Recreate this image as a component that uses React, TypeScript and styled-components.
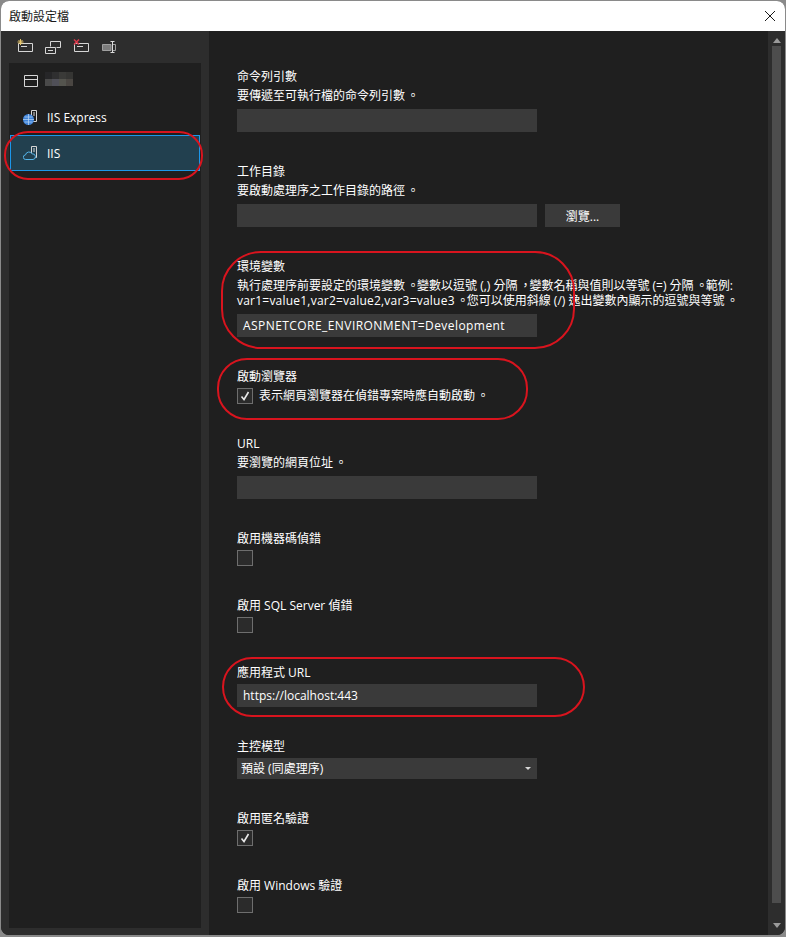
import styled, { createGlobalStyle } from 'styled-components';

const GlobalStyle = createGlobalStyle`
html, body {
	margin: 0;
	height: 100%;
	background: #8a8a8a;
}
* {
	box-sizing: border-box;
}
`;

const Window = styled.div`
position: relative;
width: 784px;
height: 934px;
margin: 1px 0 0 1px;
border-radius: 8px;
overflow: hidden;
display: flex;
flex-direction: column;
background: #1f1f1f;
color: #fff;
font-family: "Open Sans", "Noto Sans CJK TC", sans-serif;
font-size: 12px;
text-spacing-trim: space-all;
`;
const TitleBar = styled.div`
flex: none;
height: 30px;
padding: 0 9px 0 8px;
display: flex;
align-items: center;
justify-content: space-between;
background: #fff;
color: #1a1a1a;
`;
const CloseButton = styled.button`
display: flex;
padding: 0;
border: 0;
background: none;
svg {
	display: block;
}
`;
const Body = styled.div`
flex: 1;
min-height: 0;
display: flex;
`;
const Sidebar = styled.aside`
flex: none;
width: 208px;
padding: 0 8px 7px;
display: flex;
flex-direction: column;
background: #2d2d2d;
`;
const Toolbar = styled.div`
flex: none;
height: 32px;
padding-left: 8px;
display: flex;
align-items: center;
gap: 12px;
`;
const ProfileList = styled.ul`
flex: 1;
margin: 0;
padding: 0;
list-style: none;
background: #1f1f1f;
`;
const ProfileItem = styled.li<{ $active?: boolean }>`
height: 36px;
margin: 0 1px;
padding-left: 12px;
display: flex;
align-items: center;
gap: 8px;
border: 1px solid ${(p) => (p.$active ? '#1c97ea' : 'transparent')};
background: ${(p) => (p.$active ? '#22404f' : 'transparent')};
svg {
	flex: none;
}
`;
// 打了馬賽克的專案名稱
const BlurredName = styled.div`
width: 28px;
height: 14px;
margin: -4px 0 0 -2px;
background:
	linear-gradient(90deg, #262628 0 25%, #2f2f30 25% 50%, #3a3a38 50% 75%, #353533 75%) top / 100% 50% no-repeat,
	linear-gradient(90deg, #4a4a4a 0 25%, #505058 25% 50%, #54544e 50% 75%, #4a4642 75%) bottom / 100% 50% no-repeat;
`;
const Content = styled.main`
flex: 1;
min-width: 0;
padding: 37px 0 0 28px;
display: flex;
flex-direction: column;
gap: 31px;
overflow: hidden;
`;
const Section = styled.section`
display: flex;
flex-direction: column;
`;
const Label = styled.div`
height: 16px;
line-height: 18px;
margin-bottom: 4px;
`;
const Description = styled.div`
width: 510px;
line-height: 15px;
margin-bottom: 6px;
white-space: nowrap;
`;
const Latin = styled.span`
letter-spacing: 0.22px;
`;
// 全形標點佔滿一個字寬，字形靠中
const Punct = styled.span`
display: inline-block;
width: 1em;
padding-left: 2px;
`;
const FieldRow = styled.div`
display: flex;
gap: 8px;
`;
const TextField = styled.div<{ $tracking?: number }>`
width: 300px;
height: 23px;
padding: 0 6px;
line-height: 23px;
background: #3a3a3a;
letter-spacing: ${(p) => p.$tracking ?? 0}px;
`;
const BrowseButton = styled.button`
width: 75px;
height: 23px;
padding: 0;
border: 0;
background: #3a3a3a;
color: #fff;
font: inherit;
`;
const SelectField = styled(TextField)`
height: 21px;
line-height: 21px;
padding: 0 5px 0 4px;
display: flex;
align-items: center;
justify-content: space-between;
`;
const Caret = styled.span`
width: 0;
height: 0;
margin-right: 1px;
border-left: 3px solid transparent;
border-right: 3px solid transparent;
border-top: 3px solid #d8d8d8;
`;
const CheckRow = styled.div`
height: 16px;
line-height: 16px;
display: flex;
align-items: center;
gap: 6px;
`;
const CheckBox = styled.div`
width: 16px;
height: 16px;
display: flex;
align-items: center;
justify-content: center;
border: 1px solid #6e6e6e;
background: #2b2b2b;
`;
const Scrollbar = styled.div`
flex: none;
width: 17px;
display: flex;
flex-direction: column;
align-items: center;
padding: 7px 0 8px;
background: #2d2d2d;
`;
const ScrollArrow = styled.span<{ $down?: boolean }>`
flex: none;
width: 0;
height: 0;
border-left: 4.5px solid transparent;
border-right: 4.5px solid transparent;
${(p) => (p.$down ? 'border-top: 5px solid #9a9a9a;' : 'border-bottom: 5px solid #9a9a9a;')}
`;
const ScrollThumb = styled.div`
flex: none;
width: 9px;
height: 857px;
margin: 3px 0 20px;
background: #4d4d4d;
`;
// 截圖上手繪的紅色圈選
const Annotation = styled.div<{ $x: number; $y: number; $w: number; $h: number; $r: number }>`
position: absolute;
left: ${(p) => p.$x}px;
top: ${(p) => p.$y}px;
width: ${(p) => p.$w}px;
height: ${(p) => p.$h}px;
border: 2px solid #d9141e;
border-radius: ${(p) => p.$r}px;
pointer-events: none;
`;

const stroke = '#d6d6d6';

const ToolIcon = ({ children }: { children: React.ReactNode }) => (
	<svg width="16" height="16" viewBox="0 0 16 16">{children}</svg>
);

function Check() {
	return (
		<svg width="12" height="12" viewBox="0 0 12 12">
			<path d="M2.5 6.5L5 9.5L9.5 2" fill="none" stroke="#e8e8e8" strokeWidth="1.6" />
		</svg>
	);
}

export default function App() {
	return (
		<>
			<GlobalStyle />
			<Window lang="zh-Hant">
				<TitleBar>
					<span>啟動設定檔</span>
					<CloseButton>
						<svg width="12" height="12" viewBox="0 0 12 12">
							<path d="M1 1L11 11M11 1L1 11" stroke="#1a1a1a" fill="none" />
						</svg>
					</CloseButton>
				</TitleBar>
				<Body>
					<Sidebar>
						<Toolbar>
							<ToolIcon>
								<path d="M1.5 4.5h14v8h-14zM4 7.5h6" fill="none" stroke={stroke} />
								<path d="M3.5 0v6M.5 3h6M1.5 1l4 4M5.5 1l-4 4" stroke="#e8c66a" fill="none" />
							</ToolIcon>
							<ToolIcon>
								<path d="M5.5 7.5v-5h10v6h-4M.5 8.5h10v6h-10zM3 11.5h5" fill="none" stroke={stroke} />
							</ToolIcon>
							<ToolIcon>
								<path d="M1.5 4.5h14v8h-14zM4 7.5h6" fill="none" stroke={stroke} />
								<path d="M1 .5l5 5M6 .5l-5 5" stroke="#d8384a" strokeWidth="1.5" fill="none" />
							</ToolIcon>
							<ToolIcon>
								<path d="M1.5 5.5h8.5v6h-8.5z" fill="#7c7c7c" stroke="#a0a0a0" />
								<path d="M12 5.5h2.5v6H12" fill="none" stroke="#a0a0a0" />
								<path d="M9.5 2.5h4M11.5 2.5v11M9.5 13.5h4" fill="none" stroke="#dcdcdc" />
							</ToolIcon>
						</Toolbar>
						<ProfileList>
							<ProfileItem>
								<svg width="16" height="16" viewBox="0 0 16 16">
									<path d="M1.5 2.5h13v11h-13zM1.5 6.5h13" fill="none" stroke={stroke} />
								</svg>
								<BlurredName />
							</ProfileItem>
							<ProfileItem>
								<svg width="16" height="16" viewBox="0 0 16 16">
									<path d="M8.5 1.5h5v11h-5zM10 4h2M10 6h2" fill="none" stroke={stroke} />
									<circle cx="5.5" cy="10.5" r="5.5" fill="#3f83d8" />
									<path d="M0 10.5h11M5.5 5v11M1.5 8h8M1.5 13h8" stroke="#bcd8f5" strokeWidth=".7" fill="none" />
								</svg>
								<span>IIS Express</span>
							</ProfileItem>
							<ProfileItem $active>
								<svg width="16" height="16" viewBox="0 0 16 16">
									<path d="M8.5 1.5h5v11h-5zM10 4h2M10 6h2" fill="none" stroke={stroke} />
									<path d="M2.8 14.5a2.3 2.3 0 0 1-.3-4.6a3.6 3.6 0 0 1 6.7-1a2.8 2.8 0 0 1 .8 5.6z" fill="#22404f" stroke="#55b4e8" />
								</svg>
								<span>IIS</span>
							</ProfileItem>
						</ProfileList>
					</Sidebar>
					<Content>
						<Section>
							<Label>命令列引數</Label>
							<Description>要傳遞至可執行檔的命令列引數<Punct>。</Punct></Description>
							<TextField />
						</Section>
						<Section>
							<Label>工作目錄</Label>
							<Description>要啟動處理序之工作目錄的路徑<Punct>。</Punct></Description>
							<FieldRow>
								<TextField />
								<BrowseButton>瀏覽...</BrowseButton>
							</FieldRow>
						</Section>
						<Section>
							<Label>環境變數</Label>
							<Description>
								執行處理序前要設定的環境變數<Punct>。</Punct>變數以逗號 (,) 分隔<Punct>，</Punct>變數名稱與值則以等號 (=) 分隔<Punct>。</Punct>範例:
								<br />
								<Latin>var1=value1,var2=value2,var3=value3</Latin><Punct>。</Punct>您可以使用斜線 (/) 逸出變數內顯示的逗號與等號<Punct>。</Punct>
							</Description>
							<TextField $tracking={0.44}>ASPNETCORE_ENVIRONMENT=Development</TextField>
						</Section>
						<Section>
							<Label>啟動瀏覽器</Label>
							<CheckRow>
								<CheckBox><Check /></CheckBox>
								<span>表示網頁瀏覽器在偵錯專案時應自動啟動<Punct>。</Punct></span>
							</CheckRow>
						</Section>
						<Section>
							<Label>URL</Label>
							<Description>要瀏覽的網頁位址<Punct>。</Punct></Description>
							<TextField />
						</Section>
						<Section>
							<Label>啟用機器碼偵錯</Label>
							<CheckBox />
						</Section>
						<Section>
							<Label>啟用 SQL Server 偵錯</Label>
							<CheckBox />
						</Section>
						<Section>
							<Label>應用程式 URL</Label>
							<TextField>https://localhost:443</TextField>
						</Section>
						<Section>
							<Label>主控模型</Label>
							<SelectField>
								<span>預設 (同處理序)</span>
								<Caret />
							</SelectField>
						</Section>
						<Section>
							<Label>啟用匿名驗證</Label>
							<CheckBox><Check /></CheckBox>
						</Section>
						<Section>
							<Label>啟用 Windows 驗證</Label>
							<CheckBox />
						</Section>
					</Content>
					<Scrollbar>
						<ScrollArrow />
						<ScrollThumb />
						<ScrollArrow $down />
					</Scrollbar>
				</Body>
				<Annotation $x={3} $y={130} $w={199} $h={49} $r={24} />
				<Annotation $x={220} $y={250} $w={354} $h={98} $r={40} />
				<Annotation $x={216} $y={357} $w={311} $h={62} $r={30} />
				<Annotation $x={221} $y={656} $w={363} $h={60} $r={30} />
			</Window>
		</>
	);
}
